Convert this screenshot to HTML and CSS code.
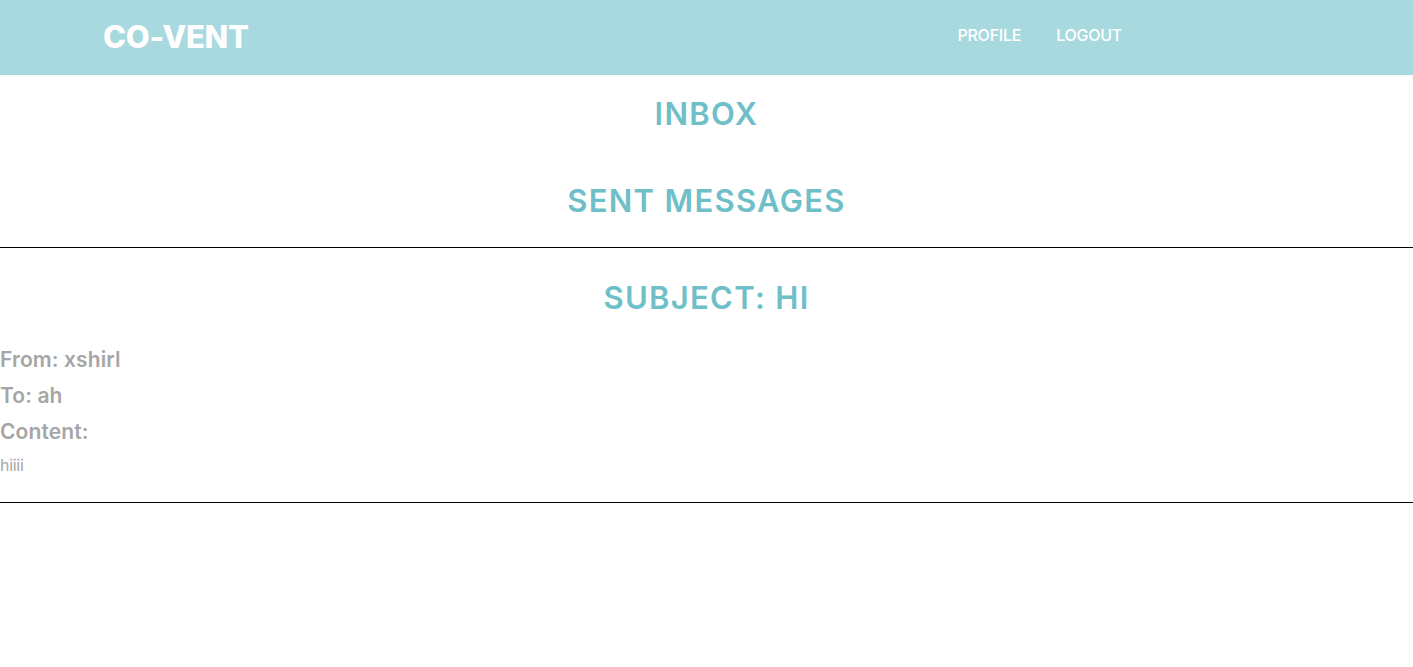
FILE: index.html
```html
<!DOCTYPE html>
<html>
<head>
<meta charset="utf-8">
<link rel="stylesheet" href="styles.css">
</head>
<body>
<header class="topbar">
  <div class="brand">CO-VENT</div>
  <nav class="nav">
    <a class="nav-link" href="#">PROFILE</a>
    <a class="nav-link" href="#">LOGOUT</a>
  </nav>
</header>
<main>
  <h2 class="section-title inbox">INBOX</h2>
  <h2 class="section-title sent">SENT MESSAGES</h2>
  <hr class="rule">
  <article class="message">
    <h2 class="section-title subject">SUBJECT: HI</h2>
    <div class="meta">From: xshirl</div>
    <div class="meta">To: ah</div>
    <div class="meta">Content:</div>
    <p class="body-text">hiiii</p>
  </article>
  <hr class="rule">
</main>
</body>
</html>
```
FILE: styles.css
```css
html, body {
  margin: 0;
  padding: 0;
  background: #ffffff;
  font-family: "Inter", "Liberation Sans", Arial, sans-serif;
}
.topbar {
  height: 75px;
  background: #a8d9df;
  display: flex;
  align-items: center;
  padding: 0 0 0 103px;
  box-sizing: border-box;
}
.brand {
  color: #ffffff;
  font-weight: 800;
  font-size: 31px;
  letter-spacing: -0.3px;
  flex: 1;
  padding-bottom: 3px;
}
.nav {
  display: flex;
  gap: 35px;
  margin-right: 291px;
  padding-bottom: 5px;
}
.nav-link {
  color: #ffffff;
  text-decoration: none;
  font-size: 16px;
  font-weight: 500;
  letter-spacing: -0.25px;
}
main {
  display: flex;
  flex-direction: column;
}
.section-title {
  margin: 0;
  text-align: center;
  color: #6fbfc8;
  font-weight: 600;
  font-size: 31px;
  letter-spacing: 1.3px;
  line-height: 38px;
}
.inbox { margin-top: 20px; }
.sent { margin-top: 49px; }
.rule {
  margin: 27px 0 0 0;
  border: 0;
  border-top: 1px solid #000;
  height: 0;
}
.message {
  display: flex;
  flex-direction: column;
}
.subject { margin-top: 31px; margin-bottom: 25px; }
.meta {
  color: #a6a6a6;
  font-size: 21px;
  font-weight: 600;
  line-height: 36px;
  letter-spacing: 0.1px;
}
.body-text {
  margin: 0;
  color: #a6a6a6;
  font-size: 16px;
  line-height: 30px;
  letter-spacing: -0.3px;
}
.message + .rule { margin-top: 22px; }
```
